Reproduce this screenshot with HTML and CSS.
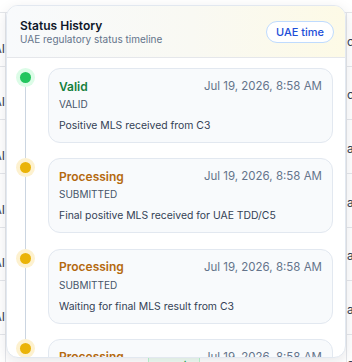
FILE: index.html
```html
<!DOCTYPE html>
<html>
<head>
<meta charset="utf-8">
<link rel="stylesheet" href="styles.css">
</head>
<body>
<div class="page">
  <div class="bg-table">
    <div class="bg-row"><div class="bg-l">AI</div><div class="bg-m"></div><div class="bg-r">cl</div></div>
    <div class="bg-row"><div class="bg-l">AI</div><div class="bg-m"></div><div class="bg-r">cl</div></div>
    <div class="bg-row"><div class="bg-l">AI</div><div class="bg-m"></div><div class="bg-r">al</div></div>
    <div class="bg-row"><div class="bg-l">AI</div><div class="bg-m"></div><div class="bg-r">al</div></div>
    <div class="bg-row"><div class="bg-l">AI</div><div class="bg-m"></div><div class="bg-r">al</div></div>
    <div class="bg-row"><div class="bg-l">AI</div><div class="bg-m"></div><div class="bg-r">al</div></div>
    <div class="bg-row"><div class="bg-l">AI</div><div class="bg-m bg-m-badge"><span class="bg-badge"><svg width="9" height="9" viewBox="0 0 12 12"><circle cx="6" cy="6" r="5" fill="none" stroke="#16a34a" stroke-width="1.2"/><path d="M3.8 6.2l1.5 1.5 3-3" fill="none" stroke="#16a34a" stroke-width="1.2"/></svg>Valid</span></div><div class="bg-r">cl</div></div>
  </div>

  <div class="panel">
    <div class="panel-head">
      <div class="head-text">
        <div class="title">Status History</div>
        <div class="subtitle">UAE regulatory status timeline</div>
      </div>
      <span class="pill">UAE time</span>
    </div>
    <div class="panel-body">
      <div class="item">
        <div class="rail"><span class="dot dot-green"></span><span class="line"></span></div>
        <div class="card">
          <div class="card-top"><span class="status st-green">Valid</span><span class="date">Jul 19, 2026, 8:58 AM</span></div>
          <div class="code">VALID</div>
          <div class="desc">Positive MLS received from C3</div>
        </div>
      </div>
      <div class="item">
        <div class="rail"><span class="dot dot-amber"></span><span class="line"></span></div>
        <div class="card">
          <div class="card-top"><span class="status st-amber">Processing</span><span class="date">Jul 19, 2026, 8:58 AM</span></div>
          <div class="code">SUBMITTED</div>
          <div class="desc">Final positive MLS received for UAE TDD/C5</div>
        </div>
      </div>
      <div class="item">
        <div class="rail"><span class="dot dot-amber"></span><span class="line"></span></div>
        <div class="card">
          <div class="card-top"><span class="status st-amber">Processing</span><span class="date">Jul 19, 2026, 8:58 AM</span></div>
          <div class="code">SUBMITTED</div>
          <div class="desc">Waiting for final MLS result from C3</div>
        </div>
      </div>
      <div class="item">
        <div class="rail"><span class="dot dot-amber"></span><span class="line"></span></div>
        <div class="card">
          <div class="card-top"><span class="status st-amber">Processing</span><span class="date">Jul 19, 2026, 8:58 AM</span></div>
          <div class="code">SUBMITTED</div>
          <div class="desc">Waiting for final MLS result from C3</div>
        </div>
      </div>
    </div>
  </div>
</div>
</body>
</html>
```
FILE: styles.css
```css
* { box-sizing: border-box; }
html, body { margin: 0; padding: 0; background: #ffffff; }
body { font-family: Inter, "Liberation Sans", sans-serif; color: #0f172a; overflow: hidden; }
.page { position: relative; width: 352px; height: 362px; overflow: hidden; }

.bg-table { padding-top: 12px; }
.bg-row { display: grid; grid-template-columns: 6px 340px 6px; height: 53.7px; border-top: 1px solid #e5e7eb; }
.bg-l, .bg-r { font-size: 12px; color: #374151; white-space: nowrap; overflow: hidden; display: flex; align-items: flex-end; padding-bottom: 10px; }
.bg-l { justify-content: flex-end; border-right: 1px solid #e5e7eb; }
.bg-r { border-left: 1px solid #e5e7eb; padding-bottom: 17px; }
.bg-m { display: flex; align-items: flex-start; }
.bg-m-badge { padding: 22px 0 0 142px; }
.bg-badge { display: inline-flex; align-items: center; gap: 4px; font-size: 11px; line-height: 14px; color: #16a34a; background: #f0fdf4; border: 1px solid #bbf7d0; padding: 1px 6px; }

.panel {
  position: absolute; left: 6px; top: 5px; width: 340px; height: 353px;
  background: #ffffff; border: 1px solid #e2e8f0; border-radius: 12px;
  box-shadow: 0 4px 14px rgba(15, 23, 42, 0.10);
  overflow: hidden;
}
.panel-head {
  height: 52px; display: flex; align-items: center; justify-content: space-between;
  padding: 0 11px 0 13px; border-bottom: 1px solid #e5e7eb;
  background: linear-gradient(90deg, #f8fafc 0%, #f9f9f3 55%, #fdfae6 100%);
}
.head-text { padding-top: 1px; }
.title { font-size: 12px; font-weight: 600; line-height: 15px; color: #0f172a; }
.subtitle { font-size: 10px; line-height: 13px; color: #64748b; }
.pill { font-size: 11px; font-weight: 500; color: #1d4ed8; background: #ffffff; border: 1px solid #bfdbfe; border-radius: 999px; padding: 3px 9px; line-height: 14px; }

.panel-body { padding: 10px 12px 0 11px; }
.item { display: grid; grid-template-columns: 30px 1fr; }
.rail { display: flex; flex-direction: column; align-items: center; width: 15px; padding-top: 4px; }
.dot { width: 11px; height: 11px; border-radius: 50%; flex: none; }
.dot-green { background: #22c55e; box-shadow: 0 0 0 4px #dcfce7; }
.dot-amber { background: #eab308; box-shadow: 0 0 0 4px #fdf1cf; }
.line { flex: 1; width: 1px; background: #cbd5e1; margin-top: 4px; margin-bottom: -4px; }

.card { background: #f8fafc; border: 1px solid #e2e8f0; border-radius: 12px; padding: 8px 10px 8px 10px; margin-bottom: 15.3px; }
.card-top { display: flex; justify-content: space-between; align-items: center; height: 18px; }
.status { font-size: 12px; font-weight: 600; }
.st-green { color: #15803d; }
.st-amber { color: #b4690e; }
.date { font-size: 11.5px; color: #64748b; }
.code { font-size: 10px; line-height: 16px; color: #475569; margin-top: 1px; }
.desc { font-size: 10.4px; line-height: 16px; color: #334155; margin-top: 6px; }
```
